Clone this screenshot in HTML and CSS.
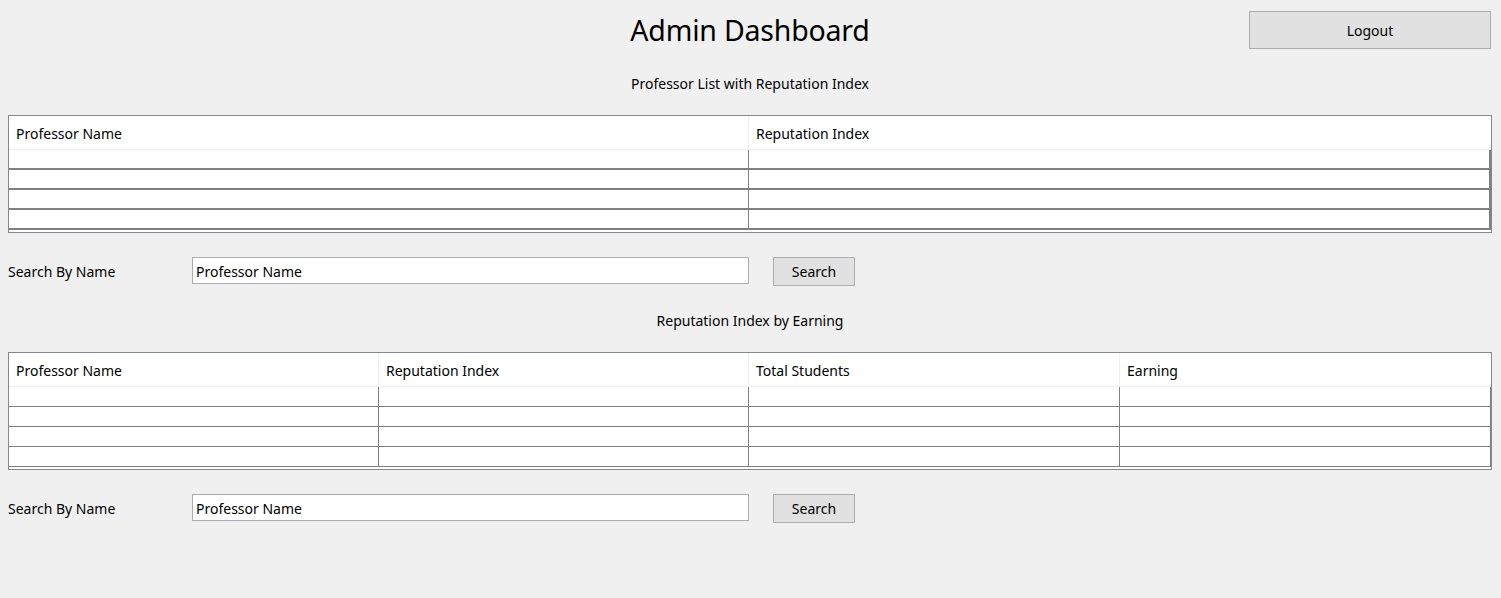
FILE: index.html
```html
<!DOCTYPE html>
<html>
<head>
<meta charset="utf-8">
<link rel="stylesheet" href="styles.css">
</head>
<body>
<div class="page">
  <header class="top">
    <div class="spacer"></div>
    <h1 class="title">Admin Dashboard</h1>
    <div class="top-right"><button class="btn logout">Logout</button></div>
  </header>

  <div class="subtitle first">Professor List with Reputation Index</div>

  <div class="grid grid-a">
    <div class="hrow cols2">
      <div class="hcell">Professor Name</div>
      <div class="hcell">Reputation Index</div>
    </div>
    <div class="drow cols2 thick"><div class="dcell"></div><div class="dcell"></div></div>
    <div class="drow cols2 thick"><div class="dcell"></div><div class="dcell"></div></div>
    <div class="drow cols2 thick"><div class="dcell"></div><div class="dcell"></div></div>
    <div class="drow cols2 thick"><div class="dcell"></div><div class="dcell"></div></div>
  </div>

  <div class="search">
    <label class="search-label">Search By Name</label>
    <input class="search-input" type="text" value="Professor Name">
    <button class="btn search-btn">Search</button>
  </div>

  <div class="subtitle second">Reputation Index by Earning</div>

  <div class="grid grid-b">
    <div class="hrow cols4">
      <div class="hcell">Professor Name</div>
      <div class="hcell">Reputation Index</div>
      <div class="hcell">Total Students</div>
      <div class="hcell">Earning</div>
    </div>
    <div class="drow cols4"><div class="dcell"></div><div class="dcell"></div><div class="dcell"></div><div class="dcell"></div></div>
    <div class="drow cols4"><div class="dcell"></div><div class="dcell"></div><div class="dcell"></div><div class="dcell"></div></div>
    <div class="drow cols4"><div class="dcell"></div><div class="dcell"></div><div class="dcell"></div><div class="dcell"></div></div>
    <div class="drow cols4"><div class="dcell"></div><div class="dcell"></div><div class="dcell"></div><div class="dcell"></div></div>
  </div>

  <div class="search">
    <label class="search-label">Search By Name</label>
    <input class="search-input" type="text" value="Professor Name">
    <button class="btn search-btn">Search</button>
  </div>
</div>
</body>
</html>
```

FILE: styles.css
```css
* { box-sizing: border-box; }
html, body {
  margin: 0;
  padding: 0;
  background: #f0f0f0;
}
body {
  font-family: "Noto Sans", "Open Sans", sans-serif;
  font-size: 14px;
  color: #000;
  width: 1501px;
  height: 598px;
  overflow: hidden;
}
.page {
  display: flex;
  flex-direction: column;
  padding: 11px 9px 0 8px;
}
.top {
  display: grid;
  grid-template-columns: 1fr auto 1fr;
  align-items: center;
  height: 38px;
}
.title {
  margin: 0;
  font-weight: 400;
  font-size: 28.5px;
  line-height: 38px;
  letter-spacing: -0.2px;
}
.top-right {
  display: flex;
  justify-content: flex-end;
  padding-right: 1px;
}
.btn {
  font-family: inherit;
  font-size: 14px;
  color: #000;
  background: #e1e1e1;
  border: 1px solid #adadad;
  padding: 0;
  margin: 0;
}
.logout {
  width: 242px;
  height: 38px;
}
.subtitle {
  text-align: center;
  line-height: 20px;
  height: 20px;
}
.subtitle.first { margin-top: 25px; margin-bottom: 21px; }
.subtitle.second { margin-top: 25px; margin-bottom: 21px; }

.grid {
  width: 1484px;
  border: 1px solid #828790;
  background: #fff;
  display: flex;
  flex-direction: column;
}
.grid-a { height: 118px; }
.grid-b { height: 118px; }
.hrow, .drow { display: grid; }
.cols2 { grid-template-columns: 740px 740px; }
.cols4 { grid-template-columns: 370px 370px 371px 371px; }
.hrow {
  height: 34px;
  border-bottom: 1px solid #f0f0f0;
}
.hcell {
  padding-left: 7px;
  padding-top: 2px;
  line-height: 31px;
  border-right: 1px solid #f0f0f0;
  white-space: nowrap;
}
.hcell:last-child { border-right: none; }
.drow {
  height: 20px;
  border-bottom: 1px solid #808080;
}
.drow.thick {
  border-bottom: 2px solid #808080;
  border-right: 2px solid #808080;
}
.drow .dcell { border-right: 1px solid #808080; }
.drow .dcell:last-child { border-right: none; }
.grid-b .drow .dcell:last-child { border-right: 1px solid #808080; }

.search {
  display: flex;
  align-items: flex-start;
  margin-top: 24px;
  height: 29px;
}
.search-label {
  width: 184px;
  line-height: 20px;
  margin-top: 5px;
}
.search-input {
  width: 557px;
  height: 27px;
  border: 1px solid #abadb3;
  background: #fff;
  font-family: inherit;
  font-size: 14px;
  color: #000;
  padding: 1px 3px 0;
  margin: 0 24px 0 0;
  outline: none;
}
.search-btn {
  width: 82px;
  height: 29px;
}
```
